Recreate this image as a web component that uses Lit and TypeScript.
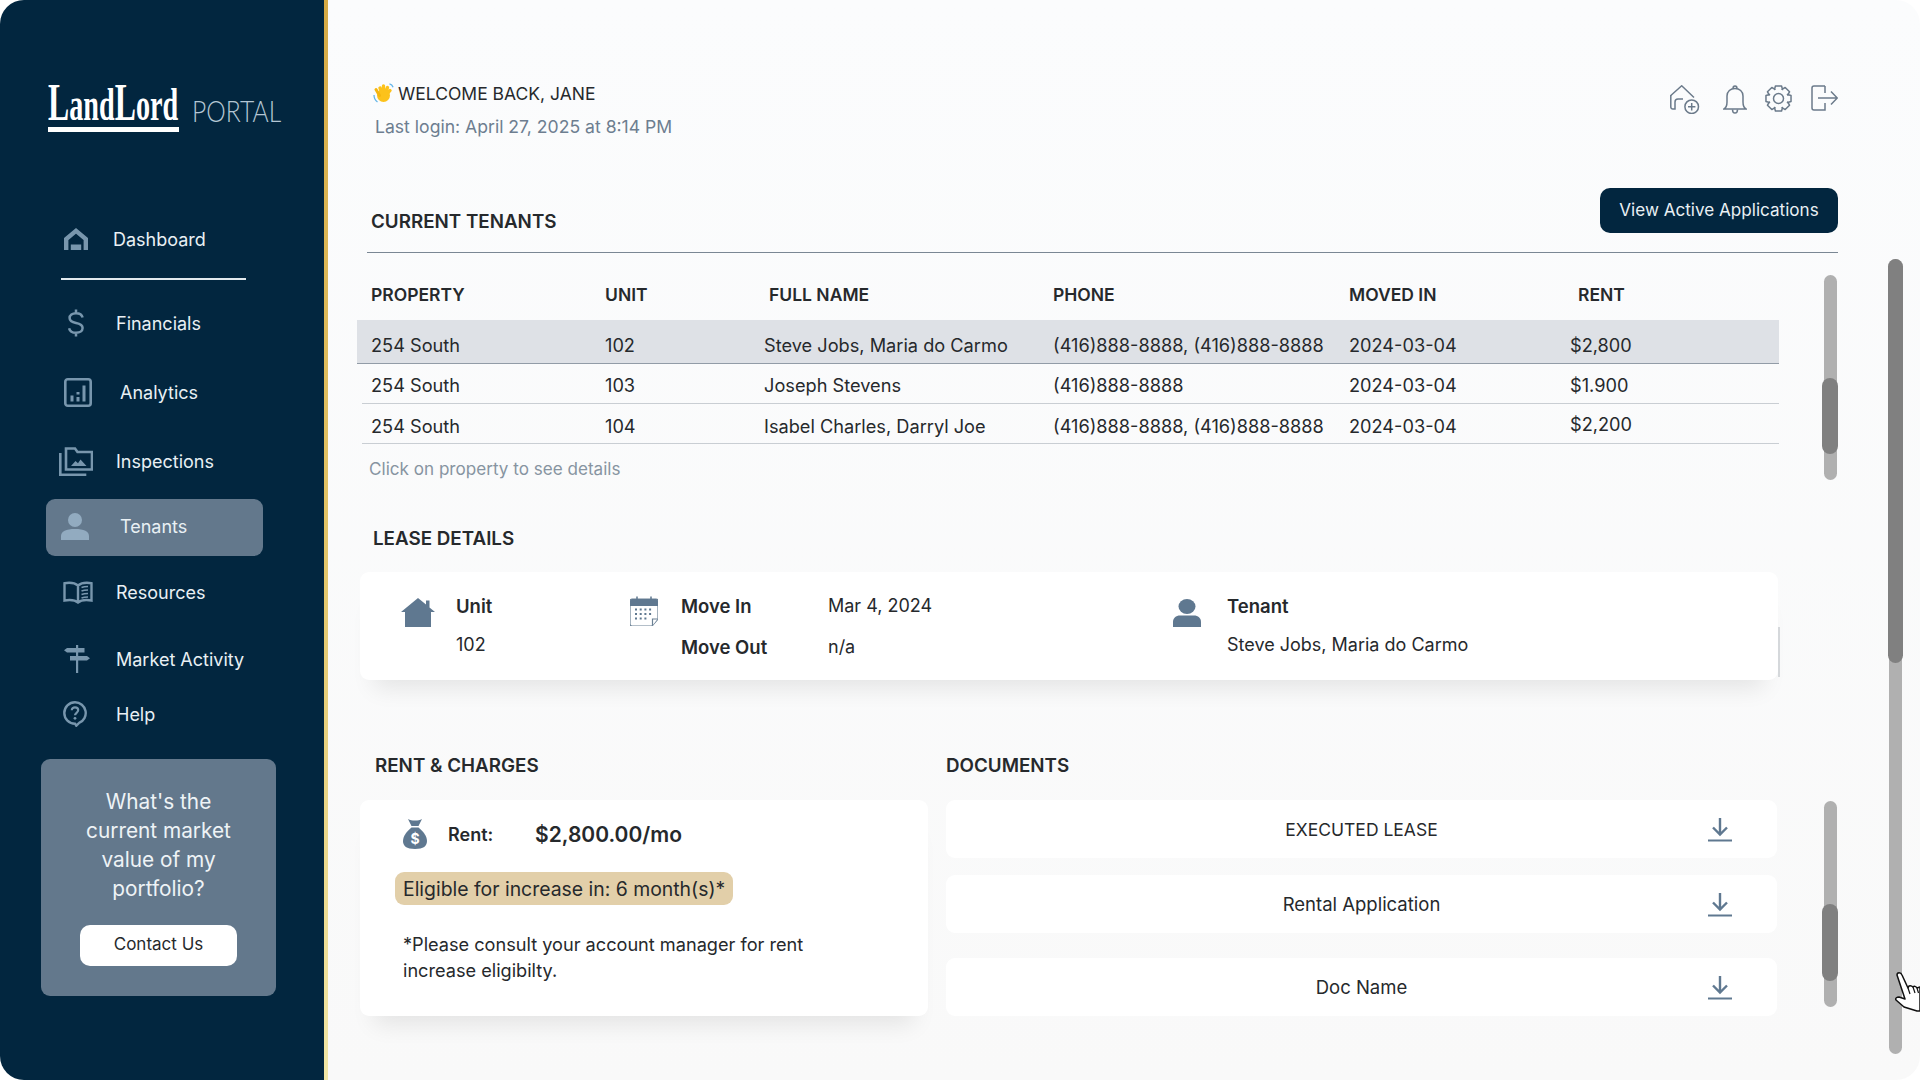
import { LitElement, css, html, svg } from "lit";
import { customElement } from "lit/decorators.js";

const navIcons = {
  home: svg`<svg width="24" height="22" viewBox="0 0 24 22"><path d="M2.200 22V11L12 2.900 21.800 11v11" fill="none" stroke="currentColor" stroke-width="4.400"/><path d="M6.800 22v-5.500h10.400V22z" fill="currentColor"/></svg>`,
  dollar: svg`<svg width="16" height="28" viewBox="0 0 16 28"><path d="M14.600 8.600C14 5.800 11.400 4.200 8 4.200c-3.700 0-6.400 1.900-6.400 4.900 0 3 2.700 4.200 6.400 4.900 3.800.7 6.600 1.900 6.600 5 0 3-2.900 4.800-6.600 4.800-3.600 0-6.300-1.700-6.900-4.600M8 .5v3.700M8 23.800v3.700" fill="none" stroke="currentColor" stroke-width="2.500"/></svg>`,
  chart: svg`<svg width="28" height="29" viewBox="0 0 28 29"><rect x="1.300" y="1.300" width="25.400" height="26.400" rx="2.500" fill="none" stroke="currentColor" stroke-width="2.600"/><path d="M6.500 17.500h3v6h-3zM12.500 14h3v2.500h-3zM12.500 19h3v4.500h-3zM18.500 7.500h3v16h-3z" fill="currentColor"/></svg>`,
  folder: svg`<svg width="34" height="29" viewBox="0 0 34 29"><path d="M1.300 6v21.700h26" fill="none" stroke="currentColor" stroke-width="2.600"/><path d="M7 22.500V1.500h9l2.500 3.500H33v17.500z" fill="none" stroke="currentColor" stroke-width="2.600"/><path d="M12 19l4.500-5 2.500 2.300 2.500-3.800 6 6.500z" fill="currentColor"/></svg>`,
  person: svg`<svg width="28" height="27" viewBox="0 0 28 27"><circle cx="14" cy="7" r="7" fill="currentColor"/><path d="M0 27v-4c0-4.500 5-7 14-7s14 2.500 14 7v4z" fill="currentColor"/></svg>`,
  book: svg`<svg width="32" height="23" viewBox="0 0 32 23"><path d="M16 4.500C13 2 7 1.500 2.500 2.200V19.500C7 18.800 13 19 16 21.500c3-2.500 9-2.700 13.500-2V2.200C25 1.500 19 2 16 4.500zM16 4.500v17" fill="none" stroke="currentColor" stroke-width="2.400"/><path d="M19.500 6.500c2-.8 4.500-1 6.500-1M19.500 10c2-.8 4.500-1 6.500-1M19.500 13.500c2-.8 4.500-1 6.500-1M19.500 17c2-.8 4.500-1 6.500-1" fill="none" stroke="currentColor" stroke-width="1.700"/></svg>`,
  sign: svg`<svg width="26" height="28" viewBox="0 0 26 28"><path d="M12 0h2.200v28H12z" fill="currentColor"/><path d="M3 3h17.500v4.500H3L0 5.200zM6 11h17l3 2.300-3 2.300H6z" fill="currentColor"/></svg>`,
  help: svg`<svg width="24" height="26" viewBox="0 0 24 26"><path d="M12 1.300a10.700 10.700 0 1 0 0 21.400l1.300 2 2.800-2.800A10.700 10.700 0 0 0 12 1.300z" fill="none" stroke="currentColor" stroke-width="2.400"/><path d="M8.800 9.300c0-1.900 1.400-3 3.200-3s3.200 1.100 3.200 2.800c0 2.700-3.200 2.700-3.200 5.200" fill="none" stroke="currentColor" stroke-width="2.200"/><circle cx="12" cy="17.300" r="1.400" fill="currentColor"/></svg>`,
};

const navItems = [
  { label: "Dashboard", icon: navIcons.home, iconX: 64, textX: 113, gap: 0 },
  { label: "Financials", icon: navIcons.dollar, iconX: 68, textX: 116, gap: 23 },
  { label: "Analytics", icon: navIcons.chart, iconX: 64, textX: 120, gap: 29 },
  { label: "Inspections", icon: navIcons.folder, iconX: 59, textX: 116, gap: 29 },
  { label: "Tenants", icon: navIcons.person, iconX: 61, textX: 120, gap: 18, active: true },
  { label: "Resources", icon: navIcons.book, iconX: 62, textX: 116, gap: 16 },
  { label: "Market Activity", icon: navIcons.sign, iconX: 64, textX: 116, gap: 27 },
  { label: "Help", icon: navIcons.help, iconX: 63, textX: 116, gap: 15 },
];

const NAV_LEFT = 46;

const columns = ["PROPERTY", "UNIT", "FULL NAME", "PHONE", "MOVED IN", "RENT"];

const tenants = [
  ["254 South", "102", "Steve Jobs, Maria do Carmo", "(416)888-8888, (416)888-8888", "2024-03-04", "$2,800"],
  ["254 South", "103", "Joseph Stevens", "(416)888-8888", "2024-03-04", "$1.900"],
  ["254 South", "104", "Isabel Charles, Darryl Joe", "(416)888-8888, (416)888-8888", "2024-03-04", "$2,200"],
];

const documents = ["EXECUTED LEASE", "Rental Application", "Doc Name"];

const downloadIcon = svg`<svg width="24" height="25" viewBox="0 0 24 25"><path d="M12 1v16M5 10.500l7 7 7-7" fill="none" stroke="#5f7890" stroke-width="2.400"/><path d="M0 23.500h24" stroke="#5f7890" stroke-width="2"/></svg>`;

// eight rounded teeth round the centre of a 27px box
function gearPath(): string {
  const points: string[] = [];
  for (let i = 0; i < 8; i++) {
    const mid = (i * Math.PI) / 4;
    [
      [-0.42, 9.8],
      [-0.24, 12.9],
      [0.24, 12.9],
      [0.42, 9.8],
    ].forEach(([offset, radius]) => {
      const x = 13.5 + radius! * Math.sin(mid + offset!);
      const y = 13.5 - radius! * Math.cos(mid + offset!);
      points.push(`${points.length === 0 ? "M" : "L"} ${x.toFixed(2)} ${y.toFixed(2)}`);
    });
  }
  return `${points.join(" ")} Z`;
}

@customElement("app-root")
export class AppRoot extends LitElement {
  static styles = css`
    :host {
      display: block;
      width: 1920px;
      height: 1080px;
      background: #fff;
      font-family: Inter, "Liberation Sans", sans-serif;
      color: #26292c;
    }
    * {
      box-sizing: border-box;
    }
    .shell {
      position: relative;
      display: flex;
      width: 1920px;
      height: 1080px;
      overflow: hidden;
      border-radius: 24px;
      background: linear-gradient(180deg, #fbfcfd 0%, #f9f9f9 100%);
    }

    /* sidebar */
    .side {
      flex: none;
      width: 328px;
      height: 1080px;
      padding-top: 85px;
      background: #02263f;
      border-right: 4px solid;
      border-image: linear-gradient(180deg, #d6aa45 0%, #e2c468 50%, #f1e6a6 100%) 1;
    }
    .logo {
      display: flex;
      margin-left: 48px;
      gap: 13px;
    }
    .mark {
      width: 131px;
    }
    .mark-text {
      display: block;
      height: 35px;
      line-height: 35px;
      white-space: nowrap;
      transform: scaleX(0.6);
      transform-origin: left;
      font-family: "Liberation Serif", serif;
      font-weight: 700;
      font-size: 47px;
      color: #fff;
    }
    .mark-text b {
      font-size: 53px;
    }
    .mark-rule {
      height: 5px;
      margin-top: 7px;
      background: #fff;
    }
    .portal {
      margin-top: 15px;
      line-height: 21px;
      font-family: Lato, sans-serif;
      font-weight: 300;
      font-size: 29px;
      color: #b4c6d4;
      transform: scaleX(0.85);
      transform-origin: left;
    }
    nav {
      margin: 87px 0 0 46px;
      width: 217px;
    }
    .item {
      display: flex;
      align-items: center;
      height: 40px;
      font-size: 18px;
      color: #e9f0f4;
      white-space: nowrap;
    }
    .item.active {
      height: 57px;
      padding-bottom: 3px;
      border-radius: 9px;
      background: #63788c;
    }
    .item.active .icon {
      color: #92abc0;
    }
    .icon {
      display: flex;
      flex: none;
      color: #7896ad;
    }
    .rule {
      height: 2px;
      width: 185px;
      margin: 19px 0 0 15px;
      background: #e2e9ee;
    }
    .cta {
      width: 235px;
      height: 237px;
      margin: 25px 0 0 41px;
      padding-top: 28px;
      border-radius: 9px;
      background: #63788c;
      text-align: center;
      font-size: 20.800px;
      line-height: 29px;
      color: #eef3f6;
    }
    .cta button {
      display: block;
      width: 157px;
      height: 41px;
      margin: 22px auto 0;
      border: 0;
      border-radius: 10px;
      background: #fff;
      font: inherit;
      font-size: 17px;
      line-height: 36px;
      padding: 0 0 4px;
      color: #26292c;
    }

    /* main column */
    main {
      flex: none;
      width: 1510px;
      padding: 80px 0 0 29px;
    }
    .top {
      display: flex;
      justify-content: space-between;
      width: 1481px;
      height: 60px;
    }
    .welcome {
      display: flex;
      align-items: center;
      gap: 4px;
      height: 26px;
      margin-left: 16px;
      font-size: 17.500px;
    }
    .login {
      margin: 8px 0 0 18px;
      line-height: 26px;
      font-size: 17.600px;
      color: #6d7e90;
    }
    .tools {
      display: flex;
      align-items: flex-start;
      padding-top: 5px;
      color: #6b7a8a;
    }
    .tools svg {
      display: block;
    }
    .bell {
      margin: 0 18px 0 23px;
    }
    .gear {
      margin-right: 19px;
    }
    .title-row {
      display: flex;
      justify-content: space-between;
      width: 1471px;
      height: 65px;
      margin: 48px 0 0 10px;
      padding-left: 4px;
      border-bottom: 1px solid #7a8794;
    }
    .title {
      line-height: 24px;
      font-size: 18.800px;
      font-weight: 600;
      white-space: nowrap;
    }
    .title-row .title {
      margin-top: 21.500px;
    }
    .primary {
      width: 238px;
      height: 45px;
      padding: 0 0 2px;
      border: 0;
      border-radius: 10px;
      background: #02263f;
      font: inherit;
      font-size: 17.100px;
      color: #e9f0f4;
    }
    .table {
      width: 1422px;
    }
    .cols {
      display: grid;
      grid-template-columns: 234px 159px 289px 296px 221px 209px;
    }
    .head {
      height: 67px;
      padding: 30px 0 0 14px;
      line-height: 24px;
      font-size: 17.500px;
      font-weight: 600;
    }
    .head span:nth-child(3) {
      padding-left: 5px;
    }
    .head span:nth-child(6) {
      padding-left: 8px;
    }
    .row {
      align-items: end;
      height: 40px;
      margin-left: 5px;
      padding: 0 0 6px 9px;
      line-height: 24px;
      font-size: 18.200px;
      white-space: nowrap;
      border-bottom: 1px solid #c9ced3;
    }
    .row:last-child {
      padding-bottom: 5px;
    }
    .row:last-child .c5 {
      margin-bottom: 2px;
    }
    .row.selected {
      height: 44px;
      margin-left: 0;
      padding-left: 14px;
      background: #dee1e6;
      border-bottom-color: #929ca7;
    }
    .hint {
      margin: 13px 0 0 12px;
      line-height: 24px;
      font-size: 17.100px;
      color: #8794a1;
    }
    .lease-title {
      margin: 46px 0 0 16px;
    }
    .card {
      position: relative;
      border-radius: 9px;
      background: #fff;
      box-shadow: 0 22px 22px -14px rgba(0, 0, 0, 0.09);
    }
    .lease {
      display: grid;
      grid-template-columns: 229px 543px 1fr;
      width: 1418px;
      height: 108px;
      margin: 21px 0 0 3px;
      padding: 22px 0 0 41px;
      line-height: 24px;
      font-size: 18px;
    }
    .lease::after {
      content: "";
      position: absolute;
      right: -2px;
      top: 55px;
      width: 2px;
      height: 50px;
      background: #d5d8db;
    }
    .group {
      display: flex;
      align-items: flex-start;
    }
    .group strong {
      font-size: 18.500px;
      font-weight: 600;
    }
    .stack {
      display: grid;
      row-gap: 15px;
    }
    .moves {
      display: grid;
      grid-template-columns: 147px auto;
      row-gap: 17px;
    }
    .i-home {
      margin: 4px 21px 0 0;
    }
    .i-cal {
      margin: 2px 23px 0 0;
    }
    .i-person {
      margin: 5px 26px 0 0;
    }
    .bottom {
      display: grid;
      grid-template-columns: 589px 1fr;
      width: 1421px;
      margin: 74px 0 0 0;
    }
    .bottom-title {
      padding-left: 18px;
    }
    .rent {
      display: flex;
      flex-direction: column;
      align-items: flex-start;
      width: 568px;
      height: 216px;
      margin: 22px 0 0 3px;
    }
    .rent-row {
      display: flex;
      align-items: center;
      margin: 19px 0 0 43px;
      height: 30px;
      font-size: 18px;
      font-weight: 600;
    }
    .rent-row svg {
      margin-right: 21px;
    }
    .rent-label {
      width: 87px;
    }
    .amount {
      font-size: 21px;
    }
    .badge {
      display: flex;
      align-items: center;
      width: 338px;
      height: 33px;
      margin: 23px 0 0 35px;
      padding-left: 8px;
      border-radius: 9px;
      background: #e2cfa9;
      font-size: 19.400px;
      white-space: nowrap;
    }
    .note {
      width: 440px;
      margin: 26px 0 0 43px;
      line-height: 26px;
      font-size: 18.150px;
    }
    .docs {
      display: flex;
      flex-direction: column;
      gap: 17px;
      width: 831px;
      margin-top: 22px;
    }
    .doc {
      display: grid;
      grid-template-columns: 1fr auto 1fr;
      align-items: center;
      height: 58px;
      border-radius: 9px;
      background: #fff;
      font-size: 18.500px;
    }
    .doc:first-child {
      font-size: 17.500px;
    }
    .doc:last-child {
      margin-top: 8px;
    }
    .doc svg {
      grid-column: 3;
      justify-self: end;
      margin-right: 45px;
    }
    .doc span {
      grid-column: 2;
    }

    /* scrollbars sit over the page */
    .track {
      position: absolute;
      width: 13px;
      border-radius: 7px;
      background: #b0b0b0;
    }
    .thumb {
      position: absolute;
      left: -2px;
      width: 16px;
      border-radius: 8px;
      background: #808080;
    }
    .track-table {
      left: 1824px;
      top: 275px;
      height: 205px;
    }
    .track-table .thumb {
      top: 103px;
      height: 76px;
    }
    .track-docs {
      left: 1824px;
      top: 801px;
      height: 206px;
    }
    .track-docs .thumb {
      top: 103px;
      height: 77px;
    }
    .track-page {
      left: 1889px;
      top: 259px;
      height: 795px;
    }
    .track-page .thumb {
      left: -1px;
      top: 0;
      width: 15px;
      height: 404px;
    }
    .cursor {
      position: absolute;
      left: 1895px;
      top: 970px;
    }
  `;

  private renderNav() {
    return navItems.map(
      (item, index) => html`
        <div
          class="item ${item.active ? "active" : ""}"
          style="margin-top:${item.gap}px"
        >
          <span
            class="icon"
            style="width:${item.textX - NAV_LEFT}px;padding-left:${item.iconX - NAV_LEFT}px"
            >${item.icon}</span
          >
          ${item.label}
        </div>
        ${index === 0 ? html`<div class="rule"></div>` : ""}
      `
    );
  }

  private renderTop() {
    return html`
      <div class="top">
        <div>
          <div class="welcome">
            <svg width="21" height="20" viewBox="0 0 21 20">
              <path d="M10.500 15L7 5M10.500 15L10.500 3M10.500 15l4-10.500M10.500 15l6.500-7.500" stroke="#fcc21b" stroke-width="3.400" stroke-linecap="round" fill="none" />
              <circle cx="10.500" cy="12.500" r="6.500" fill="#fcc21b" />
              <path d="M3 6.500l3.500 6" stroke="#f5b50f" stroke-width="3" stroke-linecap="round" />
              <path d="M1 12c0 3 1.300 5.500 3.500 7M16.500.8c1.800.4 3 1.700 3.600 3.500" stroke="#64b5e8" stroke-width="1.300" fill="none" />
            </svg>
            WELCOME BACK, JANE
          </div>
          <div class="login">Last login: April 27, 2025 at 8:14 PM</div>
        </div>
        <div class="tools">
          <svg width="30" height="29" viewBox="0 0 30 29" fill="none" stroke="currentColor" stroke-width="1.500">
            <path d="M.8 10v12a2 2 0 0 0 2 2H5v-7a3 3 0 0 1 3-3h5" />
            <path d="M.8 10.500L11.700.8 24 12.500" />
            <circle cx="21.700" cy="21.700" r="6.800" />
            <path d="M21.700 18v7.400M18 21.700h7.400" />
          </svg>
          <svg class="bell" width="24" height="29" viewBox="0 0 24 29" fill="none" stroke="currentColor" stroke-width="1.500">
            <path d="M1 24c2.500-1.500 3-4 3-7v-6c0-4.500 3.500-7.500 8-7.500s8 3 8 7.500v6c0 3 .5 5.500 3 7z" />
            <path d="M10 3.500C10 2 11 1 12 1s2 1 2 2.500M9.500 24.500c0 2 1 3.500 2.500 3.500s2.500-1.500 2.500-3.500" />
          </svg>
          <svg class="gear" width="27" height="27" viewBox="0 0 27 27" fill="none" stroke="currentColor" stroke-width="1.500">
            <circle cx="13.500" cy="13.500" r="5" />
            <path d=${gearPath()} stroke-linejoin="round" />
          </svg>
          <svg width="27" height="26" viewBox="0 0 27 26" fill="none" stroke="currentColor" stroke-width="1.500">
            <path d="M14 1H3a2 2 0 0 0-2 2v20a2 2 0 0 0 2 2h11V18M14 8V1" />
            <path d="M7 13h19M20 6.500l6.300 6.500-6.300 6.500" />
          </svg>
        </div>
      </div>
    `;
  }

  private renderTable() {
    return html`
      <div class="title-row">
        <div class="title">CURRENT TENANTS</div>
        <button class="primary">View Active Applications</button>
      </div>
      <div class="table">
        <div class="cols head">${columns.map((name) => html`<span>${name}</span>`)}</div>
        ${tenants.map(
          (row, index) => html`
            <div class="cols row ${index === 0 ? "selected" : ""}">
              ${row.map((cell, i) => html`<span class="c${i}">${cell}</span>`)}
            </div>
          `
        )}
      </div>
      <div class="hint">Click on property to see details</div>
    `;
  }

  private renderLease() {
    return html`
      <div class="title lease-title">LEASE DETAILS</div>
      <div class="card lease">
        <div class="group">
          <svg class="i-home" width="34" height="29" viewBox="0 0 34 29">
            <path d="M17 0l8 6.500V2.500h3.500v7L34 14h-4v15H4V14H0z" fill="#5f7890" />
          </svg>
          <div class="stack"><strong>Unit</strong><span>102</span></div>
        </div>
        <div class="group">
          <svg class="i-cal" width="28" height="30" viewBox="0 0 28 30">
            <path d="M2 3h24a2 2 0 0 1 2 2v18l-6 7H2a2 2 0 0 1-2-2V5a2 2 0 0 1 2-2z" fill="#fff" stroke="#6a8094" stroke-width="1.200" />
            <path d="M0 5a2 2 0 0 1 2-2h24a2 2 0 0 1 2 2v5H0z" fill="#5f7890" />
            <path d="M7 0.500v5M21 0.500v5" stroke="#5f7890" stroke-width="1.500" />
            <path d="M5 13.500h18M5 18h18M5 22.500h14" stroke="#5f7890" stroke-width="2" stroke-dasharray="2 2.700" />
            <path d="M27.500 23h-5v6.500" fill="#fff" stroke="#6a8094" stroke-width="1.200" />
          </svg>
          <div class="moves">
            <strong>Move In</strong><span>Mar 4, 2024</span>
            <strong>Move Out</strong><span>n/a</span>
          </div>
        </div>
        <div class="group">
          <svg class="i-person" width="28" height="28" viewBox="0 0 28 28">
            <ellipse cx="14" cy="7.500" rx="8.500" ry="7.500" fill="#5f7890" />
            <path d="M0 28v-5c0-4 3-6.500 7-6.500h14c4 0 7 2.500 7 6.500v5z" fill="#5f7890" />
          </svg>
          <div class="stack"><strong>Tenant</strong><span>Steve Jobs, Maria do Carmo</span></div>
        </div>
      </div>
    `;
  }

  private renderBottom() {
    return html`
      <div class="bottom">
        <div>
          <div class="title bottom-title">RENT &amp; CHARGES</div>
          <div class="card rent">
            <div class="rent-row">
              <svg width="24" height="30" viewBox="0 0 24 30">
                <path d="M5 0c2 1 4 1.500 7 1.500S17 1 19 0l-3.500 7h-7z" fill="#5f7890" />
                <path d="M8.500 8.500h7C20 12 24 17 24 22c0 5-3.500 8-12 8S0 27 0 22c0-5 4-10 8.500-13.500z" fill="#5f7890" />
                <text x="12" y="25" text-anchor="middle" font-size="14" font-weight="700" fill="#fff" font-family="Inter, sans-serif">$</text>
              </svg>
              <span class="rent-label">Rent:</span>
              <span class="amount">$2,800.00/mo</span>
            </div>
            <div class="badge">Eligible for increase in: 6 month(s)*</div>
            <div class="note">*Please consult your account manager for rent increase eligibilty.</div>
          </div>
        </div>
        <div>
          <div class="title">DOCUMENTS</div>
          <div class="docs">
            ${documents.map((name) => html`<div class="doc"><span>${name}</span>${downloadIcon}</div>`)}
          </div>
        </div>
      </div>
    `;
  }

  render() {
    return html`
      <div class="shell">
        <aside class="side">
          <div class="logo">
            <div class="mark">
              <span class="mark-text"><b>L</b>and<b>L</b>ord</span>
              <div class="mark-rule"></div>
            </div>
            <div class="portal">PORTAL</div>
          </div>
          <nav>${this.renderNav()}</nav>
          <div class="cta">
            What's the<br />current market<br />value of my<br />portfolio?
            <button>Contact Us</button>
          </div>
        </aside>
        <main>
          ${this.renderTop()} ${this.renderTable()} ${this.renderLease()} ${this.renderBottom()}
        </main>
        <div class="track track-table"><div class="thumb"></div></div>
        <div class="track track-docs"><div class="thumb"></div></div>
        <div class="track track-page"><div class="thumb"></div></div>
        <svg class="cursor" width="25" height="42" viewBox="0 0 25 42">
          <path d="M2 5c0-3 4-3 5 0l6 13 1-2c2-1 3 0 4 1 1-1 3-1 4 1l3-1v24h-3l-13-4-8-7c-1-2 1-3 3-3l6 2z" fill="#fff" stroke="#111" stroke-width="1.500" stroke-linejoin="round" />
          <path d="M13 18l2 6M18 17l2 6M22 18l1.500 5" fill="none" stroke="#111" stroke-width="1.200" />
        </svg>
      </div>
    `;
  }
}

declare global {
  interface HTMLElementTagNameMap {
    "app-root": AppRoot;
  }
}
